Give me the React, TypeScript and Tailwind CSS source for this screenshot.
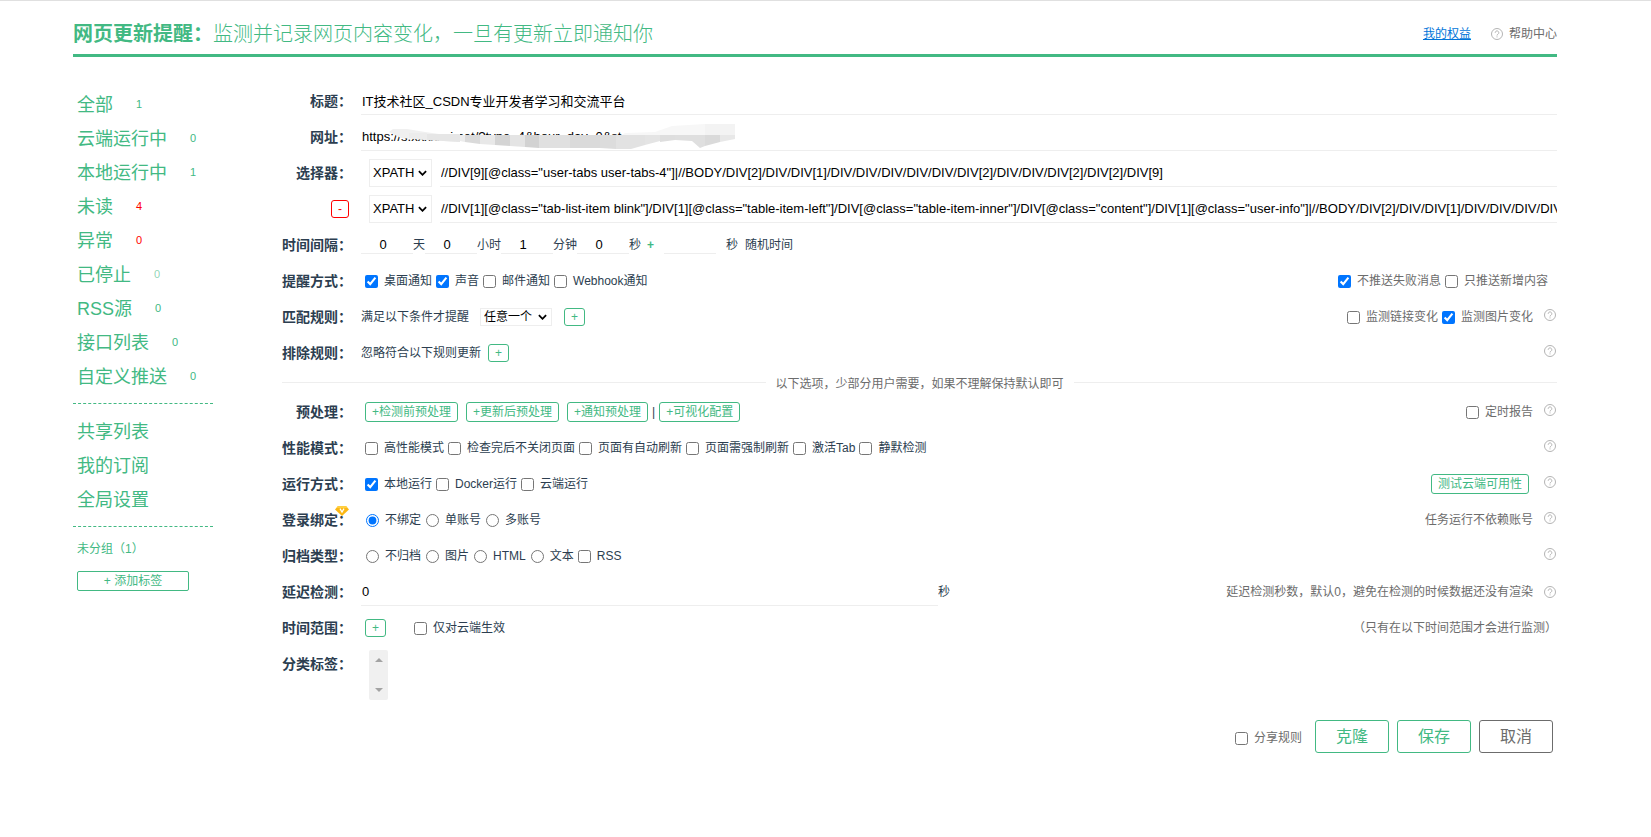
import React, { useState } from "react"

type Option = {
  id: string
  label: string
  type?: "checkbox" | "radio"
  checked?: boolean
}

const counters = [
  { name: "全部", count: 1, color: "text-[#42b983]" },
  { name: "云端运行中", count: 0, color: "text-[#42b983]" },
  { name: "本地运行中", count: 1, color: "text-[#42b983]" },
  { name: "未读", count: 4, color: "text-[#f00]" },
  { name: "异常", count: 0, color: "text-[#f00]" },
  { name: "已停止", count: 0, color: "text-[#42b983]/60" },
  { name: "RSS源", count: 0, color: "text-[#42b983]" },
  { name: "接口列表", count: 0, color: "text-[#42b983]" },
  { name: "自定义推送", count: 0, color: "text-[#42b983]" },
]

const links = ["共享列表", "我的订阅", "全局设置"]

const Help = () => (
  <svg className="h-3 w-3 shrink-0 text-[#b4b4b4]" viewBox="0 0 12 12" fill="none" stroke="currentColor" aria-hidden="true">
    <circle cx="6" cy="6" r="5.5" />
    <path d="M4.2 4.8a1.8 1.8 0 1 1 2.8 1.4c-.7.4-1 .7-1 1.3M6 8.4v1" />
  </svg>
)

const Diamond = () => (
  <svg className="absolute -top-1 left-[53px] h-[10px] w-[14px]" viewBox="0 0 14 10" aria-hidden="true">
    <path d="M3 0h8l3 3.6L7 10 0 3.6z" fill="#fcb814" />
    <path d="M3 0h8l1.5 2h-11z" fill="#ffcf40" />
    <path d="M5 2.6 7 6l2-3.4" fill="none" stroke="#fff" strokeWidth="1.2" />
  </svg>
)

// blurred-out part of the address
const Mosaic = () => (
  <svg className="absolute top-px left-[26px] h-[26px] w-[350px]" viewBox="0 0 350 26" aria-hidden="true">
    <path d="M2 8 6 5 20 5 38 8 52 10 72 10 72 18 40 16 14 14z" fill="#f0f0f0" />
    <path d="M235 11 238 9 268 8 285 2 318 0 348 0 348 11z" fill="#f7f7f7" />
    <path d="M318 0h30v11h-30z" fill="#f3f3f3" />
    <path d="M22 9h18v7l-18-2z" fill="#ececec" />
    <path d="M40 10h33v8l-33-2z" fill="#e6e6e6" />
    <path d="M73 11h5v7l-5-1z" fill="#ececec" />
    <path d="M78 11h15v9l-15-2z" fill="#dadada" />
    <path d="M93 11h15v10l-15-1z" fill="#e8e8e8" />
    <path d="M108 11h15v11l-15-1z" fill="#d4d4d4" />
    <path d="M123 11h15v12l-15-1z" fill="#e4e4e4" />
    <path d="M138 11h14v13l-14-1z" fill="#d2d2d2" />
    <path d="M152 11h31v13h-31z" fill="#e0e0e0" />
    <path d="M183 11h30v13h-30z" fill="#dadada" />
    <path d="M213 11h16v14l-16-1z" fill="#dcdcdc" />
    <path d="M229 11h29v10l-14 4h-15z" fill="#e2e2e2" />
    <path d="M258 11h15v6l-15 4z" fill="#e4e4e4" />
    <path d="M273 11h15v5l-15 2z" fill="#dedede" />
    <path d="M288 11h30v11l-5 2-8-7-17-1z" fill="#dfdfdf" />
    <path d="M318 11h15v7l-15 4z" fill="#dadada" />
    <path d="M333 11h15v4l-15 3z" fill="#e8e8e8" />
  </svg>
)

const Check: React.FC<Option & { name?: string }> = ({ id, label, type = "checkbox", checked, name }) => {
  return (
    <label htmlFor={id} className="flex items-center gap-[6px]">
      <input
        id={id}
        name={name}
        type={type}
        defaultChecked={checked}
        className={type === "radio" ? "ml-[5px] h-[13px] w-[13px]" : "ml-1 h-[13px] w-[13px]"}
      />
      {label}
    </label>
  )
}

const Row: React.FC<{ label?: React.ReactNode; htmlFor?: string; children: React.ReactNode }> = ({ label, htmlFor, children }) => (
  <div className="flex h-9 items-center">
    <label htmlFor={htmlFor} className="relative mr-[9px] flex w-[70px] shrink-0 justify-end text-sm font-bold whitespace-nowrap">
      {label}
    </label>
    <div className="flex min-w-0 flex-1 items-center">{children}</div>
  </div>
)

const Right: React.FC<{ help?: boolean; children?: React.ReactNode }> = ({ help, children }) => (
  <div className="ml-auto flex items-center text-[#6c6c6c]">
    {children}
    {help && <span className="mr-[1px] ml-[11px] pb-[5px]"><Help /></span>}
  </div>
)

const SmallButton: React.FC<{ children: React.ReactNode }> = ({ children }) => (
  <button type="button" className="h-5 rounded-[3px] border border-[#42b983] px-[6px] leading-4 whitespace-nowrap text-[#42b983]">
    {children}
  </button>
)

const PlusButton: React.FC<{ label: string }> = ({ label }) => (
  <button type="button" aria-label={label} className="flex h-[18px] w-[21px] items-center justify-center rounded-[3px] border border-[#42b983] text-[#42b983]">
    +
  </button>
)

// native arrow is hidden so the chevron keeps the same weight everywhere
const Select: React.FC<{ label: string; options: string[]; className: string }> = ({ label, options, className }) => (
  <span className="relative flex shrink-0 items-center">
    <select aria-label={label} className={"appearance-none border border-[#eee] bg-white pl-[3px] text-black " + className}>
      {options.map((o) => <option key={o}>{o}</option>)}
    </select>
    <svg className="pointer-events-none absolute right-[5px] h-[6px] w-[9px]" viewBox="0 0 10 6" fill="none" stroke="#000" strokeWidth="2" aria-hidden="true">
      <path d="M1 1l4 4 4-4" />
    </svg>
  </span>
)

const lineInput = "h-7 min-w-0 border-b border-[#eee] bg-transparent pl-[1px] text-[13px] text-black outline-none"

const App = () => {
  const [interval, setIntervalParts] = useState([
    { unit: "天", value: "0" },
    { unit: "小时", value: "0" },
    { unit: "分钟", value: "1" },
    { unit: "秒", value: "0" },
  ])

  return (
    <div className="border-t border-[#e0e0e0] bg-white pr-[94px] pl-[73px] font-['Liberation_Sans','Noto_Sans_CJK_SC',sans-serif] text-xs text-[#2c3e50]">
      <header className="flex h-14 items-center justify-between border-b-3 border-[#42b983] pt-3">
        <h1 className="text-xl font-light text-[#42b983]"><b className="font-bold">网页更新提醒：</b>监测并记录网页内容变化，一旦有更新立即通知你</h1>
        <div className="flex items-center">
          <a href="#rights" className="text-[#0074d9] underline">我的权益</a>
          <a href="#help" className="ml-5 flex items-center gap-[6px] text-[#6c6c6c]"><Help />帮助中心</a>
        </div>
      </header>

      <div className="flex pt-[26px]">
        <aside className="mr-[69px] w-[140px] shrink-0 pt-[5px] text-[#42b983]">
          <nav>
            {counters.map((c) => (
              <a key={c.name} href="#list" className="flex h-[34px] items-center pl-1 text-lg">
                {c.name}
                <span className={"ml-[23px] text-[11px] " + c.color}>{c.count}</span>
              </a>
            ))}
            <div className="mt-[9px] border-t border-dashed border-[#42b983] pt-[11px]">
              {links.map((l) => (
                <a key={l} href="#page" className="flex h-[34px] items-center pl-1 text-lg">{l}</a>
              ))}
            </div>
          </nav>
          <div className="mt-[9px] border-t border-dashed border-[#42b983] pt-[14px] pl-1">
            <a href="#ungrouped" className="block">未分组（1）</a>
            <button type="button" className="mt-[14px] h-5 w-28 rounded-[2px] border border-[#42b983] leading-4">+ 添加标签</button>
          </div>
        </aside>

        <form className="min-w-0 flex-1">
          <Row label="标题：" htmlFor="title">
            <input id="title" className={lineInput + " flex-1"} defaultValue="IT技术社区_CSDN专业开发者学习和交流平台" />
          </Row>
          <Row label="网址：" htmlFor="url">
            <div className="relative flex flex-1">
              <input id="url" className={lineInput + " flex-1"} defaultValue="https://s.xxxxxxi.net/?type=4&hour_day=0&st" />
              <Mosaic />
            </div>
          </Row>
          <Row label="选择器：" htmlFor="selector">
            <span className="mr-2 ml-2"><Select label="选择器类型" options={["XPATH", "CSS"]} className="h-7 w-[63px] text-[13px]" /></span>
            <input id="selector" className={lineInput + " flex-1"} defaultValue={'//DIV[9][@class="user-tabs user-tabs-4"]|//BODY/DIV[2]/DIV/DIV[1]/DIV/DIV/DIV/DIV/DIV/DIV[2]/DIV/DIV/DIV[2]/DIV[2]/DIV[9]'} />
          </Row>
          <Row label={<button type="button" aria-label="删除选择器" className="mr-[3px] flex h-[18px] w-[18px] items-center justify-center rounded-[3px] border border-[#f00] text-xs font-normal text-[#f00]">-</button>}>
            <span className="mr-2 ml-2"><Select label="第二个选择器类型" options={["XPATH", "CSS"]} className="h-7 w-[63px] text-[13px]" /></span>
            <input aria-label="第二个选择器" className={lineInput + " flex-1"} defaultValue={'//DIV[1][@class="tab-list-item blink"]/DIV[1][@class="table-item-left"]/DIV[@class="table-item-inner"]/DIV[@class="content"]/DIV[1][@class="user-info"]|//BODY/DIV[2]/DIV/DIV[1]/DIV/DIV/DIV/DIV/DIV'} />
          </Row>
          <Row label="时间间隔：">
            {interval.map((part, index) => (
              <label key={part.unit} className="flex items-center">
                <input
                  className="h-[18px] w-[52px] border-b border-[#eee] pr-2 text-center text-[13px] text-black outline-none"
                  value={part.value}
                  onChange={(e) => {
                    const value = e.target.value
                    setIntervalParts(interval.map((p, i) => (i === index ? { ...p, value } : p)))
                  }}
                />
                {part.unit}
              </label>
            ))}
            <b className="mr-[10px] ml-[6px] text-[#42b983]">+</b>
            <input id="random" className="h-[18px] w-[52px] border-b border-[#eee] text-center outline-none" />
            <label htmlFor="random" className="ml-[10px] flex gap-[7px]"><span>秒</span><span>随机时间</span></label>
          </Row>
          <Row label="提醒方式：">
            <Check id="desktop" label="桌面通知" checked />
            <Check id="sound" label="声音" checked />
            <Check id="mail" label="邮件通知" />
            <Check id="webhook" label="Webhook通知" />
            <Right>
              <Check id="nofail" label="不推送失败消息" checked />
              <span className="mr-[9px]"><Check id="onlynew" label="只推送新增内容" /></span>
            </Right>
          </Row>
          <Row label="匹配规则：">
            满足以下条件才提醒
            <span className="mr-3 ml-[11px]"><Select label="匹配条件" options={["任意一个", "全部"]} className="h-[18px] w-[72px] text-xs leading-4" /></span>
            <PlusButton label="添加匹配规则" />
            <Right help>
              <Check id="linkchange" label="监测链接变化" />
              <Check id="imgchange" label="监测图片变化" checked />
            </Right>
          </Row>
          <Row label="排除规则：">
            <span className="mr-[7px]">忽略符合以下规则更新</span>
            <PlusButton label="添加排除规则" />
            <Right help />
          </Row>

          <div className="flex h-[23px] items-center gap-[10px] text-[#6c6c6c]">
            <hr className="flex-1 border-[#eee]" />
            <span className="pt-[3px]">以下选项，少部分用户需要，如果不理解保持默认即可</span>
            <hr className="flex-1 border-[#eee]" />
          </div>

          <Row label="预处理：">
            <div className="ml-1 flex items-center gap-2">
              <SmallButton>+检测前预处理</SmallButton>
              <SmallButton>+更新后预处理</SmallButton>
              <SmallButton>+通知预处理</SmallButton>
            </div>
            <span className="mx-1">|</span>
            <SmallButton>+可视化配置</SmallButton>
            <Right help><Check id="report" label="定时报告" /></Right>
          </Row>
          <Row label="性能模式：">
            <Check id="fast" label="高性能模式" />
            <Check id="keepopen" label="检查完后不关闭页面" />
            <Check id="autorefresh" label="页面有自动刷新" />
            <Check id="force" label="页面需强制刷新" />
            <Check id="active" label="激活Tab" />
            <Check id="silent" label="静默检测" />
            <Right help />
          </Row>
          <Row label="运行方式：">
            <Check id="local" label="本地运行" checked />
            <Check id="docker" label="Docker运行" />
            <Check id="cloud" label="云端运行" />
            <Right help><span className="mr-1"><SmallButton>测试云端可用性</SmallButton></span></Right>
          </Row>
          <Row label={<>登录绑定：<Diamond /></>}>
            <Check id="nobind" name="bind" type="radio" label="不绑定" checked />
            <Check id="single" name="bind" type="radio" label="单账号" />
            <Check id="multi" name="bind" type="radio" label="多账号" />
            <Right help>任务运行不依赖账号</Right>
          </Row>
          <Row label="归档类型：">
            <Check id="noarchive" name="archive" type="radio" label="不归档" />
            <Check id="image" name="archive" type="radio" label="图片" />
            <Check id="html" name="archive" type="radio" label="HTML" />
            <Check id="text" name="archive" type="radio" label="文本" />
            <Check id="rss" label="RSS" />
            <Right help />
          </Row>
          <Row label="延迟检测：" htmlFor="delay">
            <input id="delay" className={lineInput + " w-[577px]"} defaultValue="0" />
            秒
            <div className="mr-[1px] ml-auto flex items-center gap-[11px] text-[#6c6c6c]">
              延迟检测秒数，默认0，避免在检测的时候数据还没有渲染
              <Help />
            </div>
          </Row>
          <Row label="时间范围：">
            <span className="mr-6 ml-1"><PlusButton label="添加时间范围" /></span>
            <Check id="cloudonly" label="仅对云端生效" />
            <Right>（只有在以下时间范围才会进行监测）</Right>
          </Row>
          <div className="flex h-[70px]">
            <span className="mt-2 w-[79px] text-sm font-bold">分类标签：</span>
            <div className="mt-1 ml-2 flex h-[50px] w-[19px] flex-col items-center justify-between rounded-[2px] bg-[#f0f0f0] py-2 text-[#a3a3a3]">
              <button type="button" aria-label="上移"><svg className="block h-1 w-2" viewBox="0 0 8 4" fill="currentColor"><path d="M4 0l4 4H0z" /></svg></button>
              <button type="button" aria-label="下移"><svg className="block h-1 w-2" viewBox="0 0 8 4" fill="currentColor"><path d="M4 4L0 0h8z" /></svg></button>
            </div>
          </div>

          <div className="mt-1 mr-1 flex items-center justify-end gap-2 text-base text-[#6c6c6c]">
            <span className="mr-[5px] pt-[3px] text-xs"><Check id="share" label="分享规则" /></span>
            <button type="button" className="h-[33px] w-[74px] rounded-[3px] border border-[#42b983] text-[#42b983]">克隆</button>
            <button type="button" className="h-[33px] w-[74px] rounded-[3px] border border-[#42b983] text-[#42b983]">保存</button>
            <button type="button" className="h-[33px] w-[74px] rounded-[3px] border border-[#6c6c6c]">取消</button>
          </div>
        </form>
      </div>
    </div>
  )
}

export default App
